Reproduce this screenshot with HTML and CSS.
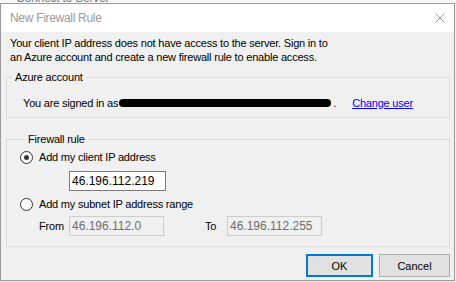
FILE: index.html
```html
<!DOCTYPE html>
<html>
<head>
<meta charset="utf-8">
<link rel="stylesheet" href="styles.css">
</head>
<body>
<div class="desktop">
  <div class="behind"><span class="behind-title">Connect to Server</span></div>
  <div class="dialog">
    <div class="titlebar">
      <span class="title">New Firewall Rule</span>
      <svg class="close" width="10" height="10" viewBox="0 0 10 10"><path d="M0.5 0.5 L9.5 9.5 M9.5 0.5 L0.5 9.5" stroke="#9a9a9a" stroke-width="1" fill="none"/></svg>
    </div>
    <div class="body">
      <p class="intro">Your client IP address does not have access to the server. Sign in to<br>an Azure account and create a new firewall rule to enable access.</p>
      <fieldset class="group azure">
        <legend>Azure account</legend>
        <div class="signed">
          <span>You are signed in as</span><span class="redact"></span><span>.</span>
          <a class="link" href="#">Change user</a>
        </div>
      </fieldset>
      <fieldset class="group rule">
        <legend>Firewall rule</legend>
        <div class="option">
          <span class="radio checked"></span><span>Add my client IP address</span>
        </div>
        <div class="ipbox">46.196.112.219</div>
        <div class="option second">
          <span class="radio"></span><span>Add my subnet IP address range</span>
        </div>
        <div class="range">
          <span class="lbl from">From</span>
          <div class="ipbox disabled">46.196.112.0</div>
          <span class="lbl to">To</span>
          <div class="ipbox disabled">46.196.112.255</div>
        </div>
      </fieldset>
      <div class="buttons">
        <button class="btn ok">OK</button>
        <button class="btn cancel">Cancel</button>
      </div>
    </div>
  </div>
</div>
</body>
</html>
```

FILE: styles.css
```css
html, body {
  margin: 0;
  padding: 0;
  background: #f0f0f0;
}
body {
  font-family: "Liberation Sans", Arial, sans-serif;
  font-size: 11px;
  letter-spacing: -0.2px;
  color: #000;
  width: 456px;
  height: 282px;
  overflow: hidden;
}
.desktop {
  position: relative;
  width: 456px;
  height: 282px;
  background: #f0f0f0;
}
.behind {
  position: absolute;
  left: 0;
  top: 0;
  width: 456px;
  height: 3px;
  overflow: hidden;
  background: #f7f7f7;
}
.behind-title {
  position: absolute;
  left: 16px;
  top: -9px;
  font-size: 12px;
  color: #777;
}
.dialog {
  position: absolute;
  left: 0;
  top: 3px;
  width: 453px;
  height: 276px;
  border: 1px solid #9a9a9a;
  background: #f0f0f0;
  display: flex;
  flex-direction: column;
}
.titlebar {
  height: 28px;
  background: #fff;
  display: flex;
  align-items: center;
  justify-content: space-between;
  padding: 0 9px 0 9px;
}
.title {
  font-size: 12px;
  letter-spacing: -0.3px;
  color: #999;
}
.close {
  display: block;
}
.body {
  flex: 1;
  padding: 4px 4px 0 5px;
}
.intro {
  margin: 0 0 0 4px;
  line-height: 14px;
}
.group {
  margin: 6px 0 0 0;
  padding: 0;
  border: 1px solid #dcdcdc;
  box-sizing: border-box;
  width: 444px;
}
.group legend {
  margin-left: 5px;
  padding: 0 3px;
  line-height: 14px;
}
.signed {
  display: flex;
  align-items: center;
  line-height: 14px;
  padding: 12px 0 7px 16px;
}
.redact {
  display: inline-block;
  width: 212px;
  height: 8px;
  background: #000;
  border-radius: 4px;
  margin: 0 2px 0 1px;
}
.link {
  color: #0000ff;
  text-decoration: underline;
  margin-left: 16px;
}
.rule {
  margin-top: 14px;
  padding: 0 0 10px 13px;
}
.option {
  display: flex;
  align-items: center;
  line-height: 14px;
  gap: 6px;
  margin-top: 4px;
}
.option.second {
  margin-top: 6px;
}
.radio {
  width: 11px;
  height: 11px;
  border: 1px solid #333;
  border-radius: 50%;
  background: #fff;
  position: relative;
  flex: none;
}
.radio.checked::after {
  content: "";
  position: absolute;
  left: 3px;
  top: 3px;
  width: 5px;
  height: 5px;
  border-radius: 50%;
  background: #333;
}
.ipbox {
  width: 93px;
  height: 18px;
  border: 1px solid #7a7a7a;
  background: #fff;
  line-height: 18px;
  padding-left: 2px;
  margin: 7px 0 0 49px;
  font-size: 12px;
  letter-spacing: 0;
}
.ipbox.disabled {
  margin: 0;
  background: #f0f0f0;
  border-color: #cccccc;
  color: #6d6d6d;
  width: 91px;
}
.range {
  display: flex;
  align-items: center;
  margin-top: 5px;
  padding-left: 19px;
}
.lbl.from {
  width: 30px;
}
.lbl.to {
  margin-left: 41px;
  width: 22px;
}
.buttons {
  display: flex;
  justify-content: flex-end;
  gap: 6px;
  margin-top: 7px;
}
.btn {
  height: 23px;
  font-family: "Liberation Sans", Arial, sans-serif;
  font-size: 11px;
  background: #e1e1e1;
  border: 1px solid #adadad;
  padding: 0;
  color: #000;
}
.btn.ok {
  width: 67px;
  border: 2px solid #0078d7;
}
.btn.cancel {
  width: 71px;
}
```
